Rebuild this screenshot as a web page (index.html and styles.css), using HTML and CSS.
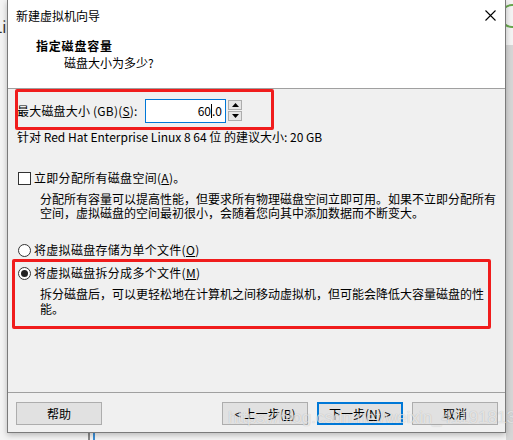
FILE: index.html
```html
<html>

<head>
    <meta charset="UTF-8">
    <meta name="viewport" content="width=device-width, initial-scale=1.0">
    <title>新建虚拟机向导</title>
    <link rel="stylesheet" href="styles.css">
</head>

<body>
    <div class="desk">
        <div class="desk-text">Lir</div>
        <div class="desk-ring"></div>
        <div class="desk-side"></div>
        <div class="desk-line"></div>

        <div class="dialog">
            <div class="titlebar">
                <span>新建虚拟机向导</span>
                <svg class="close" width="11" height="11" viewBox="0 0 11 11">
                    <path d="M0.5 0.5 L10.5 10.5 M10.5 0.5 L0.5 10.5" stroke="#000" stroke-width="1.1" fill="none"/>
                </svg>
            </div>

            <div class="header">
                <div class="header-title">指定磁盘容量</div>
                <div class="header-sub">磁盘大小为多少?</div>
            </div>

            <div class="content">
                <div class="size-row">
                    <label class="size-label">最大磁盘大小 (GB)(<u>S</u>):</label>
                    <div class="size-input">60<span class="caret"></span>.0</div>
                    <div class="spinner">
                        <span class="spin-btn"><svg width="7" height="4" viewBox="0 0 7 4"><path d="M0 4 L3.5 0 L7 4 Z" fill="#000"/></svg></span>
                        <span class="spin-btn"><svg width="7" height="4" viewBox="0 0 7 4"><path d="M0 0 L3.5 4 L7 0 Z" fill="#000"/></svg></span>
                    </div>
                </div>
                <div class="hint">针对 Red Hat Enterprise Linux 8 64 位 的建议大小: 20 GB</div>

                <div class="option option-check"><span class="checkbox"></span>立即分配所有磁盘空间(<u>A</u>)。</div>
                <p class="desc">分配所有容量可以提高性能，但要求所有物理磁盘空间立即可用。如果不立即分配所有<br>空间，虚拟磁盘的空间最初很小，会随着您向其中添加数据而不断变大。</p>

                <div class="option option-single"><span class="radio"></span>将虚拟磁盘存储为单个文件(<u>O</u>)</div>
                <div class="option option-split"><span class="radio checked"></span>将虚拟磁盘拆分成多个文件(<u>M</u>)</div>
                <p class="desc desc-split">拆分磁盘后，可以更轻松地在计算机之间移动虚拟机，但可能会降低大容量磁盘的性<br>能。</p>
            </div>

            <div class="footer">
                <button class="btn">帮助</button>
                <div class="footer-right">
                    <button class="btn">&lt; 上一步(<u>B</u>)</button>
                    <button class="btn btn-default">下一步(<u>N</u>) &gt;</button>
                    <button class="btn">取消</button>
                </div>
            </div>

            <!-- red marks drawn over the screenshot -->
            <div class="mark mark-size"></div>
            <div class="mark mark-split"></div>
        </div>

        <div class="watermark">https://blog.csdn.net/weixin_41191813</div>
    </div>
</body>

</html>
```

FILE: styles.css
```css
body {
    margin: 0;
    font-family: "Noto Sans CJK SC", "Noto Sans", sans-serif;
    font-size: 12px;
    color: #000;
}

.desk {
    position: relative;
    width: 513px;
    height: 440px;
    overflow: hidden;
    background-color: #f4f4f4;
}

.desk-text {
    position: absolute;
    left: -6px;
    top: 16px;
    font-size: 15px;
    color: #333;
}

.desk-ring {
    position: absolute;
    left: 500px;
    top: 4px;
    width: 20px;
    height: 20px;
    border: 2px solid #6aa84f;
    border-radius: 50%;
}

.desk-side {
    position: absolute;
    left: 506px;
    top: 45px;
    width: 7px;
    height: 395px;
    background-color: #d6d6d6;
}

.desk-line {
    position: absolute;
    left: 88px;
    top: 430px;
    width: 3px;
    height: 10px;
    border-left: 2px solid #8a8a8a;
    border-right: 2px solid #3b8fd6;
}

.dialog {
    position: relative;
    margin-left: 7px;
    width: 499px;
    height: 433px;
    box-sizing: border-box;
    border: 1px solid #7a7a7a;
    border-top: none;
    background-color: #f0f0f0;
    display: flex;
    flex-direction: column;
    box-shadow: 0 2px 6px rgba(0, 0, 0, 0.25);
}

.titlebar {
    height: 31px;
    background-color: #fff;
    display: flex;
    align-items: center;
    justify-content: space-between;
    padding: 0 9px 0 8px;
}

.header {
    height: 58px;
    box-sizing: border-box;
    background-color: #fff;
    border-bottom: 1px solid #a0a0a0;
    padding-top: 7px;
}

.header-title {
    padding-left: 28px;
    font-weight: bold;
    line-height: 16px;
    letter-spacing: 0.8px;
}

.header-sub {
    padding-left: 56px;
    margin-top: 1px;
    line-height: 16px;
}

.content {
    flex: 1;
    padding-left: 9px;
    white-space: nowrap;
}

.size-row {
    display: flex;
    align-items: flex-start;
    margin-top: 10px;
    height: 24px;
}

.size-label {
    width: 128px;
    line-height: 24px;
    letter-spacing: 0.2px;
}

.size-input {
    width: 81px;
    height: 24px;
    box-sizing: border-box;
    border: 1px solid #0078d7;
    background-color: #fff;
    text-align: right;
    padding-right: 3px;
    line-height: 22px;
}

.caret {
    display: inline-block;
    width: 1px;
    height: 14px;
    background-color: #000;
    vertical-align: -2px;
}

.spinner {
    margin-left: 2px;
    margin-top: 1px;
    display: flex;
    flex-direction: column;
    gap: 1px;
}

.spin-btn {
    width: 14px;
    height: 10px;
    box-sizing: border-box;
    border: 1px solid #adadad;
    background-color: #e5e5e5;
    display: flex;
    align-items: center;
    justify-content: center;
}

.hint {
    margin-top: 6px;
    line-height: 16px;
}

.option {
    display: flex;
    align-items: center;
    line-height: 16px;
    padding-left: 1px;
    letter-spacing: 0.3px;
}

.option-check {
    margin-top: 25px;
}

.option-single {
    margin-top: 22px;
}

.option-split {
    margin-top: 7px;
}

.checkbox {
    width: 13px;
    height: 13px;
    box-sizing: border-box;
    border: 1px solid #333;
    background-color: #fff;
    margin-right: 3px;
}

.radio {
    width: 13px;
    height: 13px;
    box-sizing: border-box;
    border: 1px solid #333;
    border-radius: 50%;
    background-color: #fff;
    margin-right: 3px;
    display: flex;
    align-items: center;
    justify-content: center;
}

.radio.checked::after {
    content: "";
    width: 7px;
    height: 7px;
    border-radius: 50%;
    background-color: #222;
}

.desc {
    margin: 6px 0 0 0;
    padding-left: 23px;
    line-height: 14px;
}

.desc-split {
    margin-top: 5px;
    line-height: 15px;
}

.footer {
    height: 40px;
    box-sizing: border-box;
    border-top: 1px solid #a0a0a0;
    display: flex;
    justify-content: space-between;
    padding: 9px 7px 0 8px;
}

.footer-right {
    display: flex;
    gap: 9px;
}

.btn {
    width: 86px;
    height: 23px;
    box-sizing: border-box;
    border: 1px solid #adadad;
    background-color: #e1e1e1;
    font-family: inherit;
    font-size: 12px;
    color: #000;
    padding: 0;
}

.btn-default {
    border: 2px solid #0078d7;
}

.mark {
    position: absolute;
    box-sizing: border-box;
    border: 3px solid #f01c1c;
    border-radius: 2px;
}

.mark-size {
    left: 7px;
    top: 89px;
    width: 259px;
    height: 41px;
}

.mark-split {
    left: 4px;
    top: 259px;
    width: 479px;
    height: 70px;
}

.watermark {
    position: absolute;
    left: 228px;
    top: 408px;
    font-family: "Liberation Sans", sans-serif;
    font-size: 17px;
    color: rgba(255, 255, 255, 0.65);
    text-shadow: 0 0 1px rgba(0, 0, 0, 0.25);
}
```
